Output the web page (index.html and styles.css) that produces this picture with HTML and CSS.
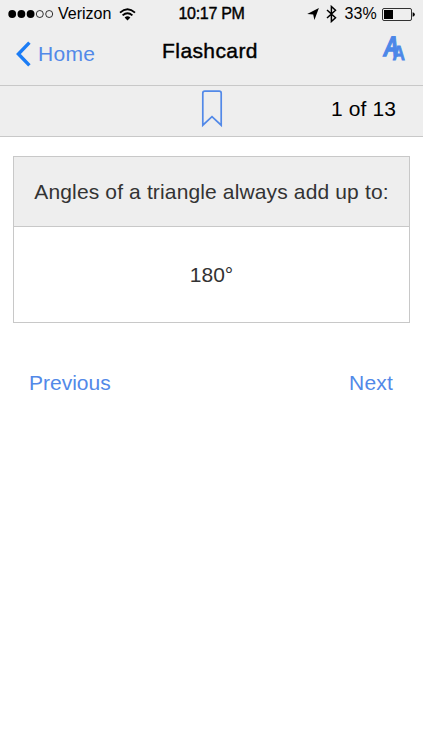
FILE: index.html
```html
<!DOCTYPE html>
<html lang="en">
<head>
    <meta charset="utf-8">
    <meta name="viewport" content="width=device-width, initial-scale=1.0">
    <title>Flashcard</title>
    <link rel="stylesheet" href="styles.css">
</head>
<body>
    <div class="status-bar">
        <div class="status-left">
            <svg class="signal" width="46" height="10" viewBox="0 0 46 10">
                <circle cx="4.2" cy="5" r="3.9"/>
                <circle cx="13.4" cy="5" r="3.9"/>
                <circle cx="22.6" cy="5" r="3.9"/>
                <circle class="empty" cx="31.8" cy="5" r="3.5"/>
                <circle class="empty" cx="41.2" cy="5" r="3.5"/>
            </svg>
            <span class="carrier">Verizon</span>
            <svg class="wifi" width="17" height="13" viewBox="0 0 17 13">
                <path d="M1 4.6 Q8.5 -2 16 4.6"/>
                <path d="M3.6 7.4 Q8.5 3 13.4 7.4"/>
                <path class="wifi-dot" d="M5.6 9.5 Q8.5 6.9 11.4 9.5 L8.5 12.4 Z"/>
            </svg>
        </div>
        <span class="clock">10:17 PM</span>
        <div class="status-right">
            <svg width="12" height="12" viewBox="0 0 12 12">
                <path d="M11.9 0.1 L7.4 12 L6.2 6.6 L0.2 6 Z"/>
            </svg>
            <svg class="bluetooth" width="11" height="18" viewBox="0 0 11 18">
                <path d="M1 5 L9.5 12.8 L5.4 16.5 V1.5 L9.5 5.2 L1 13"/>
            </svg>
            <span class="percent">33%</span>
            <svg class="battery" width="33" height="13" viewBox="0 0 33 13">
                <rect class="shell" x="0.5" y="0.5" width="29" height="12" rx="1.5"/>
                <rect x="2" y="2" width="9" height="9"/>
                <path d="M30.6 4.3 Q32.8 4.5 32.8 6.5 Q32.8 8.5 30.6 8.7 Z"/>
            </svg>
        </div>
    </div>

    <div class="nav-bar">
        <a class="back">
            <svg width="15" height="26" viewBox="0 0 15 26">
                <path d="M13.4 1.6 L2.4 13 L13.4 24.4"/>
            </svg>
            <span>Home</span>
        </a>
        <h1>Flashcard</h1>
        <a class="font-size">
            <svg width="30" height="36" viewBox="0 0 30 36">
                <text class="big-a" transform="translate(6.4 25.8) skewX(-10) scale(0.74 1)">A</text>
                <text class="small-a" transform="translate(16.6 29.6) scale(0.86 1)">A</text>
            </svg>
        </a>
    </div>

    <div class="tool-bar">
        <span></span>
        <svg class="bookmark" width="22" height="38" viewBox="0 0 22 38">
            <path d="M1.8 35.2 V3.2 Q1.8 1.2 3.8 1.2 H18.2 Q20.2 1.2 20.2 3.2 V35.2 L11 26.6 Z"/>
        </svg>
        <span class="counter">1 of 13</span>
    </div>

    <div class="card">
        <div class="question">Angles of a triangle always add up to:</div>
        <div class="answer">180°</div>
    </div>

    <div class="pager">
        <a class="previous">Previous</a>
        <a class="next">Next</a>
    </div>
</body>
</html>
```
FILE: styles.css
```css
body {
    margin: 0;
    background: #fff;
    font-family: "Liberation Sans", Arial, sans-serif;
    color: #000;
}
svg {
    display: block;
    flex: none;
}
/* The three bars share equal side columns so the middle stays centred */
.status-bar, .nav-bar, .tool-bar {
    display: grid;
    grid-template-columns: 1fr auto 1fr;
    background: #eee;
    box-sizing: border-box;
    white-space: nowrap;
}
.status-bar {
    height: 28px;
    padding: 0 8px;
    align-items: center;
    font-size: 16px;
}
.status-left, .status-right {
    display: flex;
    align-items: center;
}
.status-right {
    justify-content: flex-end;
}
.empty {
    fill: none;
    stroke: #000;
    stroke-width: 0.8;
}
.carrier {
    margin: 0 8px 0 4px;
}
.wifi path {
    fill: none;
    stroke: #000;
    stroke-width: 1.9;
}
.wifi .wifi-dot {
    fill: #000;
    stroke: none;
}
.clock {
    letter-spacing: -0.3px;
    -webkit-text-stroke: 0.4px #000;
}
.bluetooth {
    margin: 0 7px 0 7px;
    fill: none;
    stroke: #000;
    stroke-width: 1.5;
}
.percent {
    margin-right: 5px;
    letter-spacing: 0.2px;
}
.shell {
    fill: none;
    stroke: #000;
    stroke-width: 0.8;
}

/* Title row */
.nav-bar {
    height: 58px;
    padding: 0 17px 0 16px;
    border-bottom: 1px solid #c8c8c8;
}
.back {
    display: flex;
    align-items: center;
    gap: 7px;
    height: 51px;
    color: #5289e8;
    font-size: 21px;
    letter-spacing: 0.3px;
}
.back path {
    fill: none;
    stroke: #1b7cf5;
    stroke-width: 3.4;
}
h1 {
    margin: 0 2px 0 0;
    font-size: 21px;
    font-weight: normal;
    letter-spacing: 0.4px;
    line-height: 46px;
    -webkit-text-stroke: 0.4px #000;
}
.font-size {
    justify-self: end;
    padding-top: 2px;
}
.font-size svg {
    overflow: visible;
}
.font-size text {
    fill: #4c87e8;
    stroke: #4c87e8;
    stroke-width: 1.4;
    font-weight: bold;
}
.big-a {
    font-size: 28px;
}
.font-size .small-a {
    font-size: 20px;
    stroke-width: 0.8;
}

/* Bookmark and position in the deck */
.tool-bar {
    height: 51px;
    padding: 0 27px;
    border-bottom: 1px solid #c8c8c8;
}
.bookmark {
    margin-top: 4px;
    fill: none;
    stroke: #5289e8;
    stroke-width: 1.7;
}
.counter {
    justify-self: end;
    font-size: 21px;
    letter-spacing: 0.1px;
    line-height: 46px;
}

.card {
    margin: 19px 13px 0;
    border: 1px solid #c8c8c8;
    color: #333;
    font-size: 21px;
    text-align: center;
}
.question {
    padding-top: 1px;
    background: #eee;
    border-bottom: 1px solid #c8c8c8;
    letter-spacing: 0.14px;
    line-height: 68px;
    white-space: nowrap;
}
.answer {
    padding-top: 1px;
    line-height: 94px;
}

.pager {
    display: flex;
    justify-content: space-between;
    padding: 0 30px 0 29px;
    margin-top: 44px;
    color: #5289e8;
    font-size: 21px;
    line-height: 31px;
}
.next {
    letter-spacing: 0.2px;
}
```
